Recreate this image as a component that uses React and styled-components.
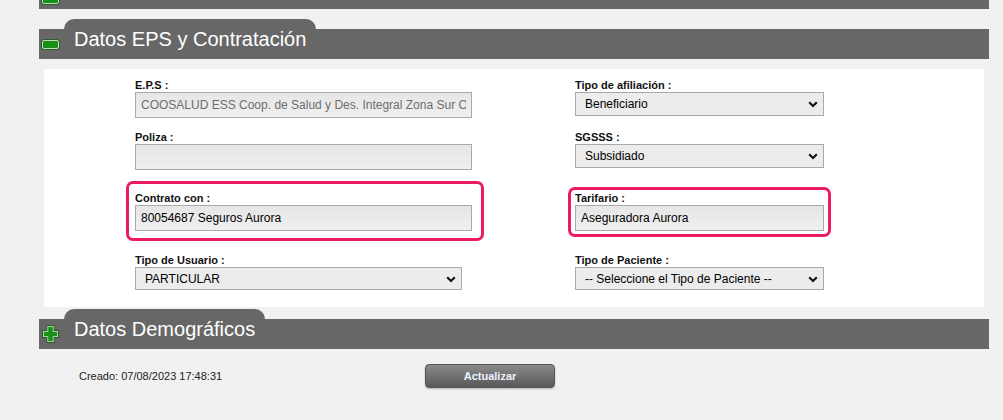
import React from "react";
import styled, { createGlobalStyle } from "styled-components";

const Global = createGlobalStyle`
  html, body { margin: 0; padding: 0; background: #f1f1f1; }
  body { font-family: "Liberation Sans", Arial, sans-serif; }
`;

const Page = styled.div`
  width: 950px;
  margin-left: 39px;
  height: 420px;
  overflow: hidden;
`;

const TopBar = styled.div`
  position: relative;
  height: 9px;
  background: #676767;
  overflow: hidden;
`;

const TopIcon = styled.div`
  position: absolute;
  left: 2px;
  top: -9px;
`;

const SectionHeader = styled.div`
  margin-top: ${(p) => p.$top}px;
`;

const Tab = styled.div`
  width: ${(p) => p.$w}px;
  height: 10px;
  margin-left: 25px;
  background: #676767;
  border-radius: 10px 10px 0 0;
`;

const Bar = styled.div`
  height: 30px;
  background: #676767;
  display: flex;
  align-items: center;
  padding-left: 2px;
`;

const IconBox = styled.span`
  width: 19px;
  display: flex;
  justify-content: center;
  align-items: center;
`;

const Title = styled.h2`
  margin: -1px 0 0 14px;
  align-self: flex-start;
  font-family: "Liberation Sans", Arial, sans-serif;
  font-weight: normal;
  font-size: 20px;
  line-height: 22px;
  color: #ffffff;
`;

const Panel = styled.div`
  margin: 10px 5px 0;
  background: #ffffff;
  padding: 10px 0 18px 91px;
  display: grid;
  grid-template-columns: 440px 1fr;
  grid-template-rows: 52px 61px 62px 35px;
`;

const Field = styled.div`
  position: relative;
  justify-self: start;
  align-self: start;
  ${(p) =>
    p.$hl
      ? `
    &::before {
      content: "";
      position: absolute;
      top: ${p.$hl[0]}px;
      right: ${p.$hl[1]}px;
      bottom: ${p.$hl[2]}px;
      left: ${p.$hl[3]}px;
      border: 3px solid #ec1b5f;
      border-radius: 7px;
      pointer-events: none;
    }
  `
      : ""}
`;

const Label = styled.label`
  display: block;
  font-size: 11px;
  font-weight: bold;
  line-height: 13px;
  color: #111;
`;

const TextInput = styled.input`
  display: block;
  box-sizing: border-box;
  width: ${(p) => p.$w}px;
  height: ${(p) => p.$h}px;
  margin: 0;
  padding: 0 5px;
  border: 1px solid #a9a9a9;
  background: linear-gradient(#e6e6e6, #efefef);
  font-family: "Liberation Sans", Arial, sans-serif;
  font-size: 12px;
  color: ${(p) => (p.$muted ? "#6e6e6e" : "#000")};
  outline: none;
`;

const SelectWrap = styled.span`
  position: relative;
  display: block;
  width: ${(p) => p.$w}px;
`;

const Select = styled.select`
  display: block;
  box-sizing: border-box;
  width: 100%;
  height: ${(p) => p.$h}px;
  margin: 0;
  padding: 0 24px 0 9px;
  border: 1px solid #a9a9a9;
  border-radius: 0;
  background: #ececec;
  appearance: none;
  -webkit-appearance: none;
  font-family: "Liberation Sans", Arial, sans-serif;
  font-size: 12px;
  color: #000;
  outline: none;
`;

const Chevron = styled.svg`
  position: absolute;
  right: 6px;
  top: 50%;
  margin-top: -3px;
  pointer-events: none;
`;

const Footer = styled.div`
  display: flex;
  align-items: center;
  height: 24px;
  margin-top: 15px;
  padding-left: 40px;
`;

const Created = styled.span`
  width: 346px;
  font-size: 11px;
  color: #222;
`;

const Button = styled.button`
  width: 130px;
  height: 24px;
  border: 1px solid #555;
  border-radius: 4px;
  background: linear-gradient(#8a8a8a, #585858);
  box-shadow: 0 1px 2px rgba(0, 0, 0, 0.25);
  color: #eef2ff;
  font-family: "Liberation Sans", Arial, sans-serif;
  font-size: 11px;
  font-weight: bold;
  padding: 0;
`;

const MinusIcon = () => (
  <svg width="19" height="11" viewBox="0 0 19 11">
    <rect x="0.5" y="0.5" width="18" height="10" rx="2.5" fill="#2f7d2f" stroke="#2b5f2b" />
    <rect x="1.5" y="1.5" width="16" height="8" rx="1.5" fill="none" stroke="#b9e0b0" />
    <rect x="3" y="3" width="13" height="5" fill="#129412" />
  </svg>
);

const PlusIcon = () => (
  <svg width="19" height="20" viewBox="0 0 19 20">
    <path
      d="M9.5 1V19M1 10H18"
      stroke="#245f24"
      strokeWidth="8"
      strokeLinejoin="round"
      fill="none"
    />
    <path d="M9.5 2V18M2 10H17" stroke="#cfe9c8" strokeWidth="6.2" fill="none" />
    <path d="M9.5 2.8V17.2M2.8 10H16.2" stroke="#18921a" strokeWidth="4.6" fill="none" />
  </svg>
);

const ChevronIcon = () => (
  <Chevron width="10" height="7" viewBox="0 0 10 7">
    <path d="M1.2 1.3L5 5 8.8 1.3" fill="none" stroke="#111" strokeWidth="2.2" />
  </Chevron>
);

const SelectField = ({ label, w, h, value, hl }) => (
  <Field $hl={hl}>
    <Label>{label}</Label>
    <SelectWrap $w={w}>
      <Select $h={h} defaultValue={value}>
        <option>{value}</option>
      </Select>
      <ChevronIcon />
    </SelectWrap>
  </Field>
);

const InputField = ({ label, w, h, value, muted, hl }) => (
  <Field $hl={hl}>
    <Label>{label}</Label>
    <TextInput $w={w} $h={h} $muted={muted} readOnly defaultValue={value} />
  </Field>
);

export default function App() {
  return (
    <>
      <Global />
      <Page>
        <TopBar>
          <TopIcon>
            <MinusIcon />
          </TopIcon>
        </TopBar>

        <SectionHeader $top={10}>
          <Tab $w={252} />
          <Bar>
            <IconBox>
              <MinusIcon />
            </IconBox>
            <Title>Datos EPS y Contratación</Title>
          </Bar>
        </SectionHeader>

        <Panel>
          <InputField
            label="E.P.S :"
            w={337}
            h={26}
            muted
            value="COOSALUD ESS Coop. de Salud y Des. Integral Zona Sur Oriental de Cartagena Ltda."
          />
          <SelectField label="Tipo de afiliación :" w={249} h={24} value="Beneficiario" />
          <InputField label="Poliza :" w={337} h={26} value="" />
          <SelectField label="SGSSS :" w={249} h={24} value="Subsidiado" />
          <InputField
            label="Contrato con :"
            w={337}
            h={26}
            value="80054687 Seguros Aurora"
            hl={[-11, -12, -10, -9]}
          />
          <InputField
            label="Tarifario :"
            w={249}
            h={26}
            value="Aseguradora Aurora"
            hl={[-5, -7, -6, -7]}
          />
          <SelectField label="Tipo de Usuario :" w={327} h={23} value="PARTICULAR" />
          <SelectField
            label="Tipo de Paciente :"
            w={249}
            h={23}
            value="-- Seleccione el Tipo de Paciente --"
          />
        </Panel>

        <SectionHeader $top={2}>
          <Tab $w={201} />
          <Bar>
            <IconBox>
              <PlusIcon />
            </IconBox>
            <Title>Datos Demográficos</Title>
          </Bar>
        </SectionHeader>

        <Footer>
          <Created>Creado: 07/08/2023 17:48:31</Created>
          <Button type="button">Actualizar</Button>
        </Footer>
      </Page>
    </>
  );
}
